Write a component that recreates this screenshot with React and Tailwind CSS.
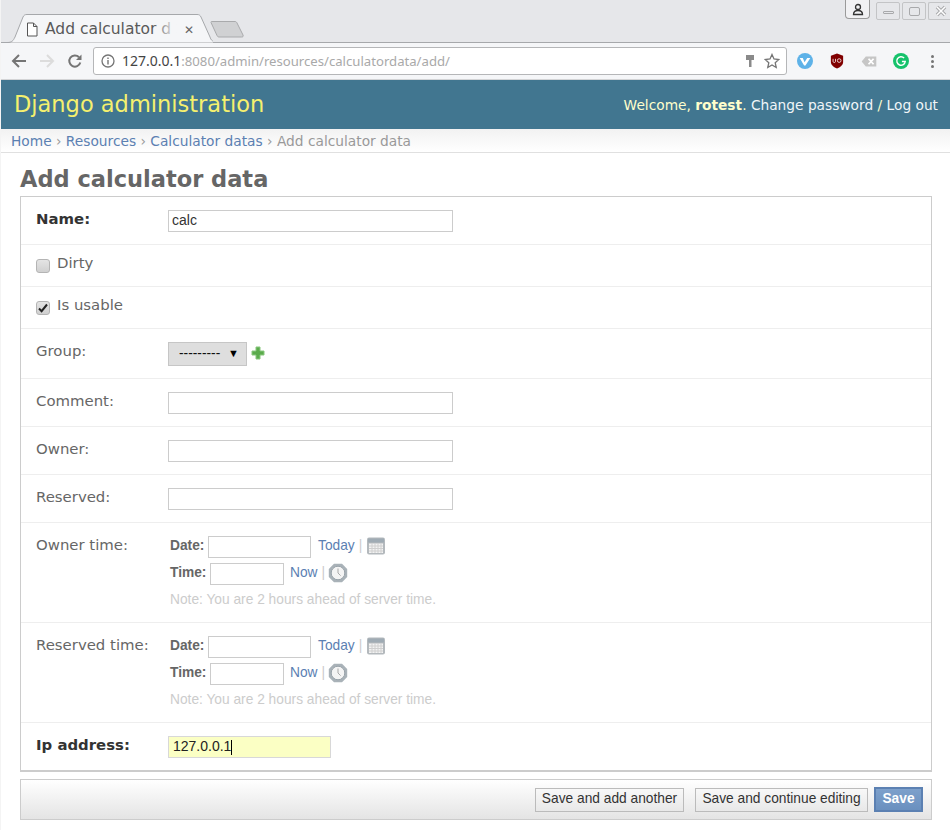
import React from "react";

const dejavu = "font-['DejaVu_Sans',sans-serif]";
const liberation = "font-['Liberation_Sans',Arial,sans-serif]";
const noto = "font-['Noto_Sans',sans-serif]";

function CalendarIcon() {
	return (
		<svg width="20" height="20" viewBox="0 0 20 20">
			<rect x="1" y="1.5" width="18" height="17" rx="2" fill="#b4b9bd" />
			<rect x="2" y="2.5" width="16" height="4" fill="#9fabb4" />
			<rect x="3" y="7.5" width="14" height="9.5" fill="#f3f3f3" />
			<path d="M3 10h14M3 12.5h14M3 15h14M6 7.5v9.5M9 7.5v9.5M12 7.5v9.5M15 7.5v9.5" stroke="#cfcfcf" strokeWidth="1" />
		</svg>
	);
}

function ClockIcon() {
	return (
		<svg width="20" height="20" viewBox="0 0 20 20">
			<path d="M6 .8h8L19.2 6v8L14 19.2H6L.8 14V6z" fill="#a9b2b8" />
			<circle cx="10" cy="10" r="6.8" fill="#f4f4f4" stroke="#98a2a9" strokeWidth="1" />
			<path d="M10 5.5V10l2.6 2.6" fill="none" stroke="#a8a8a8" strokeWidth="1" />
		</svg>
	);
}

function TextInput({width = "w-[285px]", value = ""}) {
	return <input readOnly value={value} className={`${width} block h-[22px] border border-[#cccccc] bg-white px-[3px] pb-[2px] text-[14px] text-[#333] outline-none ${liberation}`} />;
}

function Row({label, required, children, className = ""}) {
	return (
		<div className={`flex border-b border-[#eeeeee] pl-[15px] pt-[13px] ${className}`}>
			<div className={`-mt-px w-[132px] shrink-0 text-[14.9px] leading-[20px] ${dejavu} ${required ? "font-bold text-[#333333]" : "text-[#666666]"}`}>{label}</div>
			{children}
		</div>
	);
}

function Checkbox({checked}) {
	return (
		<span className="flex h-[14px] w-[14px] items-center justify-center rounded-[3px] border border-[#b4b4b4] bg-gradient-to-b from-[#e4e4e4] to-[#d0d0d0]">
			{checked && (
				<svg width="10" height="10" viewBox="0 0 10 10">
					<path d="M1 5.5l2.6 2.7L9 1.5" fill="none" stroke="#222" strokeWidth="2" />
				</svg>
			)}
		</span>
	);
}

function DateTime({label}) {
	return (
		<Row label={label} className="h-[100px]">
			<div className={`${liberation} text-[13.75px] text-[#666666]`}>
				<div className="flex h-[22px] items-center pl-[2px]">
					<span className="mb-[2px] w-[38px] font-bold">Date:</span>
					<TextInput width="w-[103px]" />
					<a className="mb-[2px] ml-[7px] text-[#5b80b2]">Today</a>
					<span className="mb-[2px] ml-[4px] text-[#cccccc]">|</span>
					<span className="mb-[2px] ml-[4px]">
						<CalendarIcon />
					</span>
				</div>
				<div className="mt-[5px] flex h-[22px] items-center pl-[2px]">
					<span className="mb-[2px] w-[40px] font-bold">Time:</span>
					<TextInput width="w-[74px]" />
					<a className="mb-[2px] ml-[6px] text-[#5b80b2]">Now</a>
					<span className="mb-[2px] ml-[4px] text-[#cccccc]">|</span>
					<span className="mb-[2px] ml-[3px]">
						<ClockIcon />
					</span>
				</div>
				<div className="mt-[7px] pl-[2px] leading-[16px] text-[#cccccc]">Note: You are 2 hours ahead of server time.</div>
			</div>
		</Row>
	);
}

function TabStrip() {
	return (
		<div className="flex h-[43px] justify-between border-b border-[#a6a8ab] bg-[#e6e7ea]">
			<div className="flex items-end pl-[6px]">
				{/* tab */}
				<div className="relative -mb-px flex h-[29px] w-[206px] items-center pl-[19px] pt-[2px]">
					<svg className="absolute inset-0" width="206" height="29" viewBox="0 0 206 29">
						<path d="M0 28.5C5 28.5 6 27 8 23L16 3C17 1 18 .5 20 .5H190C192 .5 193 1 194 3L203 23C204 26 205 28 212 28.5" fill="#f5f6f8" stroke="#a6a8ab" strokeWidth="1" />
					</svg>
					<svg className="relative" width="12" height="15" viewBox="0 0 12 15">
						<path d="M1.5 1h6l3.500 3.500V14h-9.500z M7.500 1v3.500H11" fill="#fff" stroke="#555" strokeWidth="1" />
					</svg>
					<span className={`relative ml-[7px] w-[132px] whitespace-nowrap text-[15.5px] text-[#5a5a5a] ${dejavu}`}>
						Add calculator d
						<span className="absolute inset-y-0 right-0 w-[24px] bg-gradient-to-r from-transparent to-[#f5f6f8]"></span>
					</span>
					<span className="relative ml-[7px] text-[12px] leading-none text-[#666]">✕</span>
				</div>
				{/* new tab button */}
				<svg className="mb-[4px] ml-[-3px]" width="36" height="18" viewBox="0 0 36 18">
					<path d="M1.500 1.500H25C26 1.500 26.500 2 27 3L33 15C33.500 16.500 33 17 31.500 17H9C8 17 7.500 16.500 7 15.500L1 2.500C.8 2 1 1.500 1.500 1.500z" fill="#d0d1d3" stroke="#a9aaac" strokeWidth="1" />
				</svg>
			</div>
			<div className="flex items-start">
				<div className="mr-[6px] flex h-[19px] w-[25px] items-center justify-center rounded-b-[4px] border border-t-0 border-[#9a9a9a] bg-[#f1f1f3]">
					<svg width="12" height="13" viewBox="0 0 12 13">
						<circle cx="6" cy="4" r="2.500" fill="none" stroke="#333" strokeWidth="1.300" />
						<path d="M1.500 11.500c0-3 2-4 4.500-4s4.500 1 4.500 4z" fill="none" stroke="#333" strokeWidth="1.300" />
					</svg>
				</div>
				<div className="mt-[2px] flex gap-[2px]">
					<div className="flex h-[18px] w-[24px] items-center justify-center rounded-[2px] border border-[#c3c4c6]">
						<span className="mt-[3px] h-[3px] w-[11px] rounded-[1px] border border-[#a8a9ab]"></span>
					</div>
					<div className="flex h-[18px] w-[24px] items-center justify-center rounded-[2px] border border-[#c3c4c6]">
						<span className="h-[9px] w-[11px] rounded-[2px] border border-[#a8a9ab]"></span>
					</div>
					<div className="flex h-[18px] w-[22px] items-center justify-center rounded-l-[2px] border border-r-0 border-[#c3c4c6] pl-[2px]">
						<svg width="12" height="12" viewBox="0 0 12 12">
							<path d="M2 2l8 8M10 2l-8 8" stroke="#a8a9ab" strokeWidth="3.500" />
							<path d="M2 2l8 8M10 2l-8 8" stroke="#fff" strokeWidth="1.500" />
						</svg>
					</div>
				</div>
			</div>
		</div>
	);
}

function ToolBar() {
	return (
		<div className="flex h-[37px] items-center border-b border-[#d3d4d6] bg-[#f5f6f8] pl-[10px]">
			<svg width="16" height="16" viewBox="0 0 16 16">
				<path d="M15 8H2.500M8 2L2 8l6 6" fill="none" stroke="#757575" strokeWidth="2" />
			</svg>
			<svg className="ml-[12px]" width="16" height="16" viewBox="0 0 16 16">
				<path d="M1 8h12.500M8 2l6 6-6 6" fill="none" stroke="#dcdcdc" strokeWidth="2" />
			</svg>
			<svg className="ml-[12px]" width="16" height="16" viewBox="0 0 16 16">
				<path d="M13.300 9.500A5.600 5.600 0 1 1 12 4.200" fill="none" stroke="#757575" strokeWidth="2" />
				<path d="M14.500 1.500v5.500H9z" fill="#757575" />
			</svg>
			<div className="ml-[10px] flex h-[28px] w-[694px] items-center rounded-[3px] border border-[#b5b6b8] bg-white pl-[7px] pr-[6px]">
				<svg width="14" height="14" viewBox="0 0 14 14">
					<circle cx="7" cy="7" r="6" fill="none" stroke="#757575" strokeWidth="1.300" />
					<path d="M7 6v4.500M7 3.500v1.500" stroke="#757575" strokeWidth="1.400" />
				</svg>
				<span className={`ml-[7px] text-[13.15px] text-[#a9a9a9] ${noto}`}>
					<span className="text-[14px] text-[#444]">127.0.0.1</span>:8080/admin/resources/calculatordata/add/
				</span>
				<svg className="ml-auto" width="10" height="14" viewBox="0 0 10 14">
					<path d="M1 1h8v5H6.500v7h-2.500V6H1z" fill="#8a8a8a" />
				</svg>
				<svg className="ml-[9px]" width="16" height="16" viewBox="0 0 16 16">
					<path d="M8 1.500l2 4.500 4.800.5-3.600 3.200 1 4.800L8 12l-4.200 2.500 1-4.800L1.200 6.500 6 6z" fill="none" stroke="#757575" strokeWidth="1.300" />
				</svg>
			</div>
			<svg className="ml-[10px]" width="16" height="16" viewBox="0 0 18 18">
				<circle cx="9" cy="9" r="9" fill="#5eb2e8" />
				<path d="M3 5.500h3.500l2 5 3-5H15L9.500 14H8z" fill="#fff" />
			</svg>
			<svg className="ml-[17px]" width="14" height="16" viewBox="0 0 16 18">
				<path d="M8 .5l7 2.500v7c0 3.500-3.500 6-7 7.500-3.500-1.500-7-4-7-7.500V3z" fill="#800000" />
				<path d="M3.500 6.500v3c0 1.600 2.800 1.600 2.800 0v-3" fill="none" stroke="#f3e3e3" strokeWidth="1" />
				<circle cx="10.500" cy="8.500" r="2.100" fill="none" stroke="#f3e3e3" strokeWidth="1" />
			</svg>
			<svg className="ml-[17px]" width="16" height="11" viewBox="0 0 17 12">
				<path d="M5 .5H16.500V11.500H5L.5 6z" fill="#c6c6c6" />
				<path d="M8 3l5.500 6M13.500 3L8 9" stroke="#fff" strokeWidth="2" />
			</svg>
			<svg className="ml-[16px]" width="16" height="16" viewBox="0 0 17 17">
				<circle cx="8.500" cy="8.500" r="8.500" fill="#15c26b" />
				<path d="M11.800 5.400A4.500 4.500 0 1 0 13 9H9.500" fill="none" stroke="#fff" strokeWidth="1.500" />
			</svg>
			<span className="ml-[22px] flex flex-col gap-[2px]">
				<span className="h-[3px] w-[3px] rounded-full bg-[#757575]"></span>
				<span className="h-[3px] w-[3px] rounded-full bg-[#757575]"></span>
				<span className="h-[3px] w-[3px] rounded-full bg-[#757575]"></span>
			</span>
		</div>
	);
}

function AdminHeader() {
	return (
		<div className={`flex h-[49px] items-center justify-between bg-[#417690] pl-[13px] pr-[12px] ${dejavu}`}>
			<h1 className="text-[22.5px] font-normal text-[#f5f06e]">Django administration</h1>
			<div className="mt-[2px] text-[13.75px] text-[#ffffcc]">
				Welcome, <strong>rotest</strong>. <span className="text-[#f0f5f8]">Change password</span> / <span className="text-[#f0f5f8]">Log out</span>
			</div>
		</div>
	);
}

function Breadcrumbs() {
	return (
		<div className={`h-[24px] border-b border-[#e0e0e0] bg-gradient-to-b from-[#f2f2f2] to-white pl-[10px] text-[13.75px] leading-[25px] text-[#999999] ${dejavu}`}>
			<a className="text-[#5b80b2]">Home</a> › <a className="text-[#5b80b2]">Resources</a> › <a className="text-[#5b80b2]">Calculator datas</a> › Add calculator data
		</div>
	);
}

export default function App() {
	return (
		<div className="h-[830px] w-[950px] overflow-hidden border-l border-[#f4f4f4] bg-white">
			<TabStrip />
			<ToolBar />
			<AdminHeader />
			<Breadcrumbs />

			<div className="pl-[19px] pr-[18px]">
				<h2 className={`mt-[12px] text-[22.5px] font-bold leading-[28px] text-[#666666] ${dejavu}`}>Add calculator data</h2>

				<div className="mt-[3px] border border-b-2 border-[#cccccc]">
					<Row label="Name:" required className="h-[48px]">
						<TextInput value="calc" />
					</Row>

					<div className="flex h-[42px] items-center gap-[7px] border-b border-[#eeeeee] pl-[15px]">
						<Checkbox />
						<span className={`pb-[4px] text-[14.9px] text-[#666666] ${dejavu}`}>Dirty</span>
					</div>
					<div className="flex h-[42px] items-center gap-[7px] border-b border-[#eeeeee] pl-[15px]">
						<Checkbox checked />
						<span className={`pb-[4px] text-[14.9px] text-[#666666] ${dejavu}`}>Is usable</span>
					</div>

					<Row label="Group:" className="h-[50px]">
						<div className="relative h-[24px] w-[79px]">
							<select className={`block h-[24px] w-[79px] appearance-none border border-[#c6c6c6] bg-[#dedede] pl-[10px] text-[13.75px] text-[#111] outline-none ${liberation}`}>
								<option>---------</option>
							</select>
							<span className="absolute right-[8px] top-[3px] text-[11px] text-black">▼</span>
						</div>
						<svg className="ml-[4px] mt-[4px]" width="14" height="14" viewBox="0 0 14 14">
							<path d="M5 1h4v4h4v4H9v4H5V9H1V5h4z" fill="#5bab4c" stroke="#88c77c" strokeWidth="1" />
						</svg>
					</Row>

					<Row label="Comment:" className="h-[48px]">
						<TextInput />
					</Row>
					<Row label="Owner:" className="h-[48px]">
						<TextInput />
					</Row>
					<Row label="Reserved:" className="h-[48px]">
						<TextInput />
					</Row>

					<DateTime label="Owner time:" />
					<DateTime label="Reserved time:" />

					<div className="flex h-[47px] pl-[15px] pt-[13px]">
						<div className={`-mt-px w-[132px] shrink-0 text-[14.9px] font-bold leading-[20px] text-[#333333] ${dejavu}`}>Ip address:</div>
						<div className="relative">
							<input readOnly value="127.0.0.1" className={`block h-[22px] w-[163px] border border-[#d8d8d8] bg-[#fbffc4] px-[4px] pb-[2px] text-[14px] text-[#222] outline-none ${liberation}`} />
							<span className="absolute left-[63px] top-[4px] h-[15px] w-px bg-black"></span>
						</div>
					</div>
				</div>

				<div className={`mt-[7px] flex h-[41px] items-center justify-end border border-[#cccccc] bg-gradient-to-b from-white to-[#e4e4e4] pr-[8px] ${liberation}`}>
					<button className="h-[24px] w-[149px] whitespace-nowrap border border-[#bbbbbb] bg-gradient-to-b from-[#f8f8f8] to-[#e8e8e8] pb-[1px] text-[13.75px] text-[#333]">Save and add another</button>
					<button className="ml-[11px] h-[24px] w-[173px] whitespace-nowrap border border-[#bbbbbb] bg-gradient-to-b from-[#f8f8f8] to-[#e8e8e8] pb-[1px] text-[13.75px] text-[#333]">Save and continue editing</button>
					<button className="ml-[6px] h-[25px] w-[49px] border-2 border-[#5b80b2] bg-gradient-to-b from-[#7da0cb] to-[#6a90bf] text-[13.75px] font-bold text-white">Save</button>
				</div>
			</div>
		</div>
	);
}
